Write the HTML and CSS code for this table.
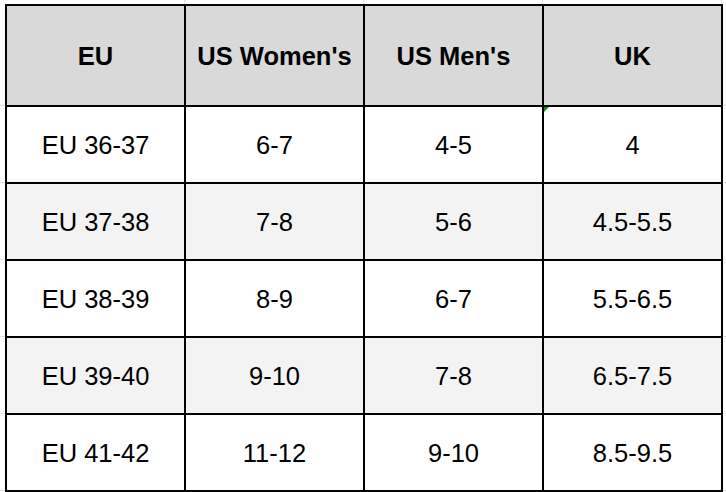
FILE: index.html
```html
<!DOCTYPE html>
<html>
<head>
<meta charset="utf-8">
<link rel="stylesheet" href="styles.css">
</head>
<body>
<div class="sheet">
  <div class="cell head">EU</div>
  <div class="cell head">US Women's</div>
  <div class="cell head">US Men's</div>
  <div class="cell head">UK</div>

  <div class="cell">EU 36-37</div>
  <div class="cell">6-7</div>
  <div class="cell">4-5</div>
  <div class="cell note">4</div>

  <div class="cell alt">EU 37-38</div>
  <div class="cell alt">7-8</div>
  <div class="cell alt">5-6</div>
  <div class="cell alt">4.5-5.5</div>

  <div class="cell">EU 38-39</div>
  <div class="cell">8-9</div>
  <div class="cell">6-7</div>
  <div class="cell">5.5-6.5</div>

  <div class="cell alt">EU 39-40</div>
  <div class="cell alt">9-10</div>
  <div class="cell alt">7-8</div>
  <div class="cell alt">6.5-7.5</div>

  <div class="cell">EU 41-42</div>
  <div class="cell">11-12</div>
  <div class="cell">9-10</div>
  <div class="cell">8.5-9.5</div>
</div>
</body>
</html>
```
FILE: styles.css
```css
html {
  margin: 0;
  padding: 0;
  min-height: 100%;
  background-color: #ffffff;
  background-image:
    repeating-linear-gradient(to bottom, transparent 0 76px, #e3e3e3 76px 77px),
    repeating-linear-gradient(to right, transparent 0 178px, #e3e3e3 178px 179px);
  background-position: 0 29px, 6px 0;
}
body {
  margin: 0;
  padding: 4px 0 0 5px;
  font-family: "Liberation Sans", Arial, sans-serif;
  color: #000000;
}
.sheet {
  display: grid;
  grid-template-columns: repeat(4, 179px);
  grid-template-rows: 101px repeat(5, 77px);
  width: 716px;
  border-left: 2px solid #000;
  border-top: 2px solid #000;
}
.cell {
  position: relative;
  display: flex;
  align-items: center;
  justify-content: center;
  padding-top: 2px;
  border-right: 2px solid #000;
  border-bottom: 2px solid #000;
  font-size: 25.5px;
  background: #ffffff;
  white-space: nowrap;
}
.head {
  background: #d9d9d9;
  font-weight: bold;
}
.alt {
  background: #f3f3f3;
}
.note::before {
  content: "";
  position: absolute;
  left: 0;
  top: 0;
  width: 0;
  height: 0;
  border-top: 5px solid #1a8a1a;
  border-right: 5px solid transparent;
}
```
